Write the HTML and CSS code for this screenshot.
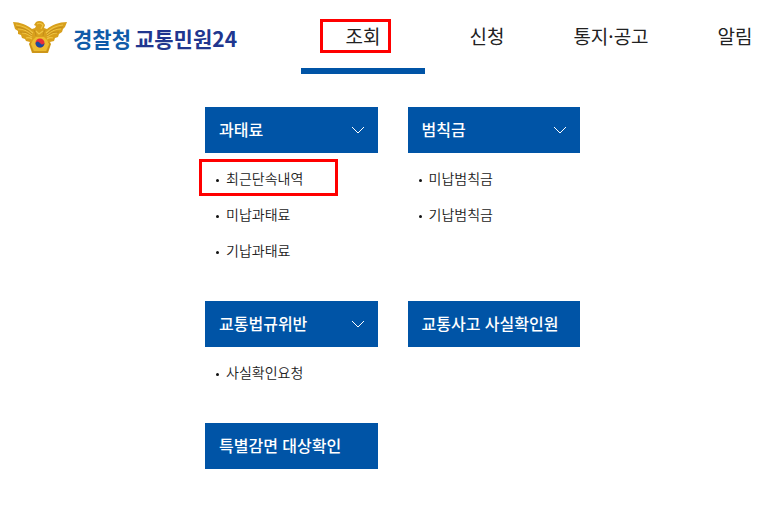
FILE: index.html
```
<!DOCTYPE html>
<html lang="ko">
<head>
<meta charset="utf-8">
<meta name="viewport" content="width=device-width, initial-scale=1">
<title>경찰청 교통민원24</title>
<link rel="stylesheet" href="styles.css">
</head>
<body>
<header class="header">
  <a class="logo" href="#">
    <svg class="emblem" viewBox="0 0 56 34" aria-hidden="true">
      <path fill="#d8a01c" d="M1 2C8 2 15 5 20 9L23 8L24 6L22 5L24 2Q27 0 31 2L33 5L32 8L35 9C40 5 47 2 55 2L53 7L51 9L50 12L47 14L46 17L43 18L42 21L38 22L39 24L36 33H20L17 24L18 22L14 21L13 19L10 18L9 15L6 14L6 11L3 9Z"/>
      <g fill="none" stroke="#f0c544" stroke-width="1.1">
        <path d="M4 5Q14 6 21 13M6 9Q14 9 20 15M10 13Q15 13 20 17M14 18Q17 17 20 19M51 5Q41 6 34 13M49 9Q41 9 35 15M45 13Q40 13 35 17M41 18Q38 17 35 19"/>
        <path d="M25 4Q28 2 31 5L29 9M24 11L27 14L31 11"/>
      </g>
      <g fill="none" stroke="#b67f18" stroke-width=".6">
        <path d="M4 7Q14 8 20 14M8 12Q14 11 20 16M51 7Q41 8 35 14M47 12Q41 11 35 16M22 10Q24 13 24 16M33 10Q31 13 31 16M19 22L18 24L21 32H35L38 24L36 22"/>
      </g>
      <path fill="#ecbd30" d="M21 20L24 17H32L35 20L37 24L34 31H22L19 24Z"/>
      <circle cx="28" cy="23" r="4.5" fill="#e72f39"/>
      <path fill="#174b9f" d="M23.500 23Q25.500 20 28 23T32.500 23A4.500 4.500 0 0 1 23.500 23Z"/>
    </svg>
    <span class="brand"><span class="agency">경찰청</span><span>교통민원24</span></span>
  </a>
  <nav class="nav">
    <a class="tab active" href="#"><span class="tab-label">조회</span></a>
    <a class="tab" href="#">신청</a>
    <a class="tab" href="#">통지·공고</a>
    <a class="tab" href="#">알림</a>
  </nav>
</header>
<main class="menu">
  <section class="group">
    <button class="title" type="button">과태료<svg class="chevron" viewBox="0 0 14 8" aria-hidden="true"><path d="M1 1L7 7L13 1"/></svg></button>
    <ul class="links">
      <li class="marked"><a href="#">최근단속내역</a></li>
      <li><a href="#">미납과태료</a></li>
      <li><a href="#">기납과태료</a></li>
    </ul>
  </section>
  <section class="group">
    <button class="title" type="button">범칙금<svg class="chevron" viewBox="0 0 14 8" aria-hidden="true"><path d="M1 1L7 7L13 1"/></svg></button>
    <ul class="links">
      <li><a href="#">미납범칙금</a></li>
      <li><a href="#">기납범칙금</a></li>
    </ul>
  </section>
  <section class="group">
    <button class="title" type="button">교통법규위반<svg class="chevron" viewBox="0 0 14 8" aria-hidden="true"><path d="M1 1L7 7L13 1"/></svg></button>
    <ul class="links">
      <li><a href="#">사실확인요청</a></li>
    </ul>
  </section>
  <section class="group">
    <a class="title" href="#">교통사고 사실확인원</a>
  </section>
  <section class="group">
    <a class="title" href="#">특별감면 대상확인</a>
  </section>
</main>
</body>
</html>
```
FILE: styles.css
```
* {
  box-sizing: border-box;
}

body {
  margin: 0;
  background: #fff;
  color: #222;
  font-family: "Noto Sans CJK KR", sans-serif;
}

a {
  color: inherit;
  text-decoration: none;
}

.header {
  display: flex;
  height: 74px;
  overflow: hidden;
}

.logo {
  display: flex;
  flex: 0 0 301px;
  align-items: center;
  gap: 5px;
  padding-left: 12px;
}

.emblem {
  width: 56px;
  height: 34px;
}

.brand {
  display: flex;
  gap: 4px;
  padding-top: 2px;
  color: #20368f;
  font-size: 21px;
  font-weight: 700;
  line-height: 32px;
  white-space: nowrap;
}

.agency {
  color: #0f5ba8;
}

.nav {
  display: flex;
}

.tab {
  display: flex;
  flex: 0 0 124px;
  align-items: center;
  justify-content: center;
  border-bottom: 6px solid transparent;
  padding-top: 4px;
  font-size: 19px;
  line-height: 26px;
}

.tab.active {
  border-color: #0054a6;
}

.tab-label,
.marked {
  position: relative;
}

.tab-label::before,
.marked::before {
  content: "";
  position: absolute;
  border: 3px solid #f00;
}

.tab-label::before {
  inset: -4px -11px -4px -26px;
}

.marked::before {
  inset: -2px 40px 1px -6px;
}

.menu {
  display: grid;
  grid-template-columns: 1fr 1fr;
  gap: 31px 30px;
  max-width: 380px;
  margin: 33px auto;
  padding-left: 5px;
}

.title {
  display: flex;
  align-items: center;
  justify-content: space-between;
  width: 100%;
  height: 46px;
  border: 0;
  padding: 0 13px 2px 14px;
  background: #0054a6;
  color: #fff;
  font-family: inherit;
  font-size: 16px;
  font-weight: 500;
}

.chevron {
  width: 14px;
  height: 8px;
  margin-top: 2px;
  fill: none;
  stroke: #fff;
}

.links {
  margin: 8px 0 0;
  padding: 0 0 1px;
  list-style: none;
}

.links li {
  display: flex;
  align-items: center;
  height: 36px;
  padding: 0 0 2px 11px;
  font-size: 14px;
  font-weight: 350;
}

.links a::before {
  content: "";
  display: inline-block;
  width: 3px;
  height: 3px;
  margin-right: 7px;
  border-radius: 50%;
  background: #111;
  vertical-align: middle;
}
```
